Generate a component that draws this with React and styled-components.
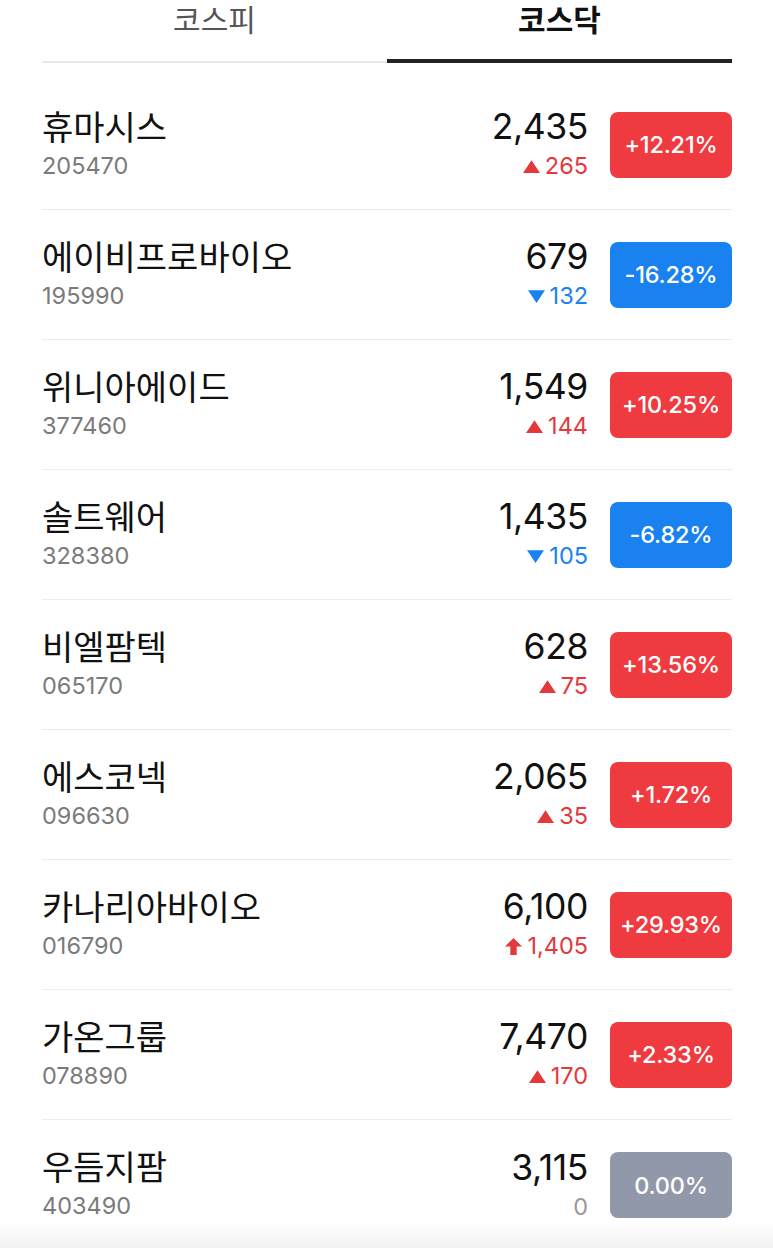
import React from "react";
import styled, { createGlobalStyle } from "styled-components";

const Global = createGlobalStyle`
  html, body { margin: 0; padding: 0; background: #fff; }
  body { font-family: Inter, "Noto Sans CJK KR", sans-serif; -webkit-font-smoothing: antialiased; }
`;

const Page = styled.div`
  width: 773px;
  padding: 0 41px 0 42px;
  box-sizing: border-box;
  background: #fff;
`;

const Tabs = styled.div`
  display: flex;
  height: 63px;
`;

const Tab = styled.div`
  flex: 1;
  box-sizing: border-box;
  height: 63px;
  display: flex;
  justify-content: center;
  align-items: flex-start;
  font-family: "Noto Sans CJK KR", sans-serif;
  font-size: 30px;
  line-height: 36px;
  font-weight: ${(p) => (p.$active ? 700 : 400)};
  color: ${(p) => (p.$active ? "#111" : "#555")};
  border-bottom: ${(p) => (p.$active ? "4px solid #222" : "2px solid #e9e9e9")};
`;

const List = styled.div`
  margin-top: 17px;
`;

const Row = styled.div`
  display: flex;
  align-items: center;
  height: 130px;
  box-sizing: border-box;
  border-bottom: ${(p) => (p.$last ? "none" : "1px solid #ececec")};
`;

const NameCol = styled.div`
  flex: 1;
  display: flex;
  flex-direction: column;
  padding-bottom: 4px;
`;

const Name = styled.div`
  font-family: "Noto Sans CJK KR", sans-serif;
  font-size: 34px;
  line-height: 40px;
  color: #111;
`;

const Code = styled.div`
  font-family: Inter, sans-serif;
  font-size: 23.5px;
  line-height: 28px;
  color: #7b7b7b;
  margin-top: 6px;
`;

const PriceCol = styled.div`
  display: flex;
  flex-direction: column;
  align-items: flex-end;
  margin-right: 22px;
  padding-bottom: 2px;
`;

const Price = styled.div`
  font-family: Inter, sans-serif;
  font-size: 35.5px;
  line-height: 40px;
  color: #111;
  letter-spacing: -0.4px;
`;

const Change = styled.div`
  display: flex;
  align-items: center;
  gap: 5px;
  font-family: Inter, sans-serif;
  font-size: 23.5px;
  line-height: 28px;
  margin-top: 5px;
  color: ${(p) => (p.$dir === "up" || p.$dir === "limit" ? "#e4383b" : p.$dir === "down" ? "#1a82f0" : "#9a9a9a")};
`;

const Badge = styled.div`
  width: 122px;
  height: 66px;
  border-radius: 8px;
  display: flex;
  align-items: center;
  justify-content: center;
  font-family: Inter, sans-serif;
  font-weight: 500;
  font-size: 23.5px;
  letter-spacing: -0.2px;
  color: #fff;
  background: ${(p) => (p.$dir === "down" ? "#1a82f0" : p.$dir === "flat" ? "#9198aa" : "#ef3a3f")};
`;

const BottomFade = styled.div`
  position: fixed;
  left: 0;
  right: 0;
  bottom: 0;
  height: 26px;
  background: linear-gradient(to bottom, rgba(0,0,0,0), rgba(0,0,0,0.05));
  pointer-events: none;
`;

const Arrow = ({ dir }) => {
  if (dir === "up")
    return (
      <svg width="17" height="13" viewBox="0 0 16 12">
        <path d="M8 0 L16 12 L0 12 Z" fill="currentColor" />
      </svg>
    );
  if (dir === "down")
    return (
      <svg width="17" height="13" viewBox="0 0 16 12">
        <path d="M0 0 L16 0 L8 12 Z" fill="currentColor" />
      </svg>
    );
  if (dir === "limit")
    return (
      <svg width="17" height="17" viewBox="0 0 16 16">
        <path d="M8 0 L16 8 L11 8 L11 16 L5 16 L5 8 L0 8 Z" fill="currentColor" />
      </svg>
    );
  return null;
};

const stocks = [
  { name: "휴마시스", code: "205470", price: "2,435", change: "265", pct: "+12.21%", dir: "up" },
  { name: "에이비프로바이오", code: "195990", price: "679", change: "132", pct: "-16.28%", dir: "down" },
  { name: "위니아에이드", code: "377460", price: "1,549", change: "144", pct: "+10.25%", dir: "up" },
  { name: "솔트웨어", code: "328380", price: "1,435", change: "105", pct: "-6.82%", dir: "down" },
  { name: "비엘팜텍", code: "065170", price: "628", change: "75", pct: "+13.56%", dir: "up" },
  { name: "에스코넥", code: "096630", price: "2,065", change: "35", pct: "+1.72%", dir: "up" },
  { name: "카나리아바이오", code: "016790", price: "6,100", change: "1,405", pct: "+29.93%", dir: "limit" },
  { name: "가온그룹", code: "078890", price: "7,470", change: "170", pct: "+2.33%", dir: "up" },
  { name: "우듬지팜", code: "403490", price: "3,115", change: "0", pct: "0.00%", dir: "flat" },
];

export default function App() {
  return (
    <>
      <Global />
      <Page>
        <Tabs>
          <Tab>코스피</Tab>
          <Tab $active>코스닥</Tab>
        </Tabs>
        <List>
          {stocks.map((s, i) => (
            <Row key={s.code} $last={i === stocks.length - 1}>
              <NameCol>
                <Name>{s.name}</Name>
                <Code>{s.code}</Code>
              </NameCol>
              <PriceCol>
                <Price>{s.price}</Price>
                <Change $dir={s.dir}>
                  <Arrow dir={s.dir} />
                  {s.change}
                </Change>
              </PriceCol>
              <Badge $dir={s.dir}>{s.pct}</Badge>
            </Row>
          ))}
        </List>
      </Page>
      <BottomFade />
    </>
  );
}
